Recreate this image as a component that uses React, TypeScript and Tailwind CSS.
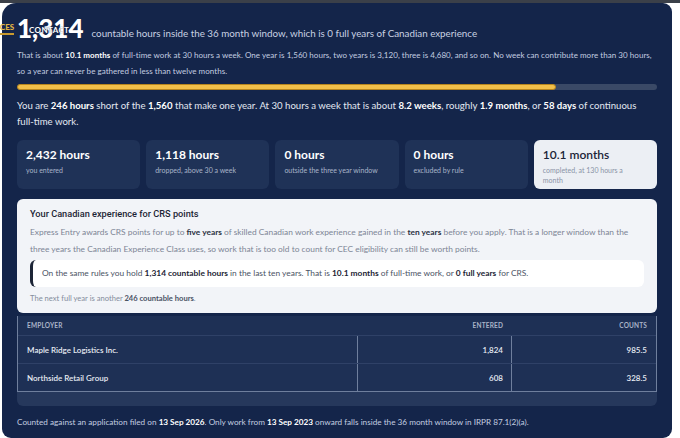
const font = { fontFamily: "Lato, 'Noto Sans', sans-serif" };

type Stat = { value: string; label: string; light?: boolean };

const stats: Stat[] = [
  { value: "2,432 hours", label: "you entered" },
  { value: "1,118 hours", label: "dropped, above 30 a week" },
  { value: "0 hours", label: "outside the three year window" },
  { value: "0 hours", label: "excluded by rule" },
  { value: "10.1 months", label: "completed, at 130 hours a month", light: true },
];

const rows = [
  { employer: "Maple Ridge Logistics Inc.", entered: "1,824", counts: "985.5" },
  { employer: "Northside Retail Group", entered: "608", counts: "328.5" },
];

function StatCard({ s }: { s: Stat }) {
  return (
    <div
      className={
        s.light
          ? "h-[49px] rounded-md bg-[#eceff4] px-[9px] pt-[7px]"
          : "h-[49px] rounded-md bg-[#1f3257] px-[9px] pt-[7px]"
      }
    >
      <div
        className={
          s.light
            ? "text-[12px] font-semibold leading-[16px] text-[#1b2438]"
            : "text-[12px] font-bold leading-[16px] text-white"
        }
      >
        {s.value}
      </div>
      <div
        className={
          s.light
            ? "mt-[2px] w-[88px] text-[7px] leading-[10px] text-[#8a93a6]"
            : "mt-[2px] text-[7px] leading-[10px] text-[#a9b4c9]"
        }
      >
        {s.label}
      </div>
    </div>
  );
}

export default function App() {
  return (
    <div className="relative h-[438px] w-[680px] overflow-hidden bg-white" style={font}>
      <div className="h-[3px] bg-[#3b4049]" />
      <div className="ml-[2px] mr-[8px] h-[435px] rounded-[9px] rounded-tl-[14px] bg-[#14254a] px-[15px] pt-[11px]">
        {/* headline */}
        <div className="flex items-end gap-[8px]">
          <div className="relative">
            <span className="text-[26px] font-black leading-[29px] text-white">1,314</span>
            <span className="absolute left-[12px] top-[10px] text-[8px] font-bold tracking-wider text-white [text-shadow:0_0_1px_#14254a]">
              CONTACT
            </span>
          </div>
          <span className="pb-[3px] text-[9.8px] text-[#c9d2e3]">
            countable hours inside the 36 month window, which is 0 full years of Canadian experience
          </span>
        </div>

        <p className="mt-[3px] text-[8px] leading-[16px] tracking-[0.005em] text-[#c3cde0]">
          That is about <b className="text-white">10.1 months</b> of full-time work at 30 hours a week. One year is
          1,560 hours, two years is 3,120, three is 4,680, and so on. No week can contribute more than 30 hours,
          <br />
          so a year can never be gathered in less than twelve months.
        </p>

        {/* progress */}
        <div className="mt-[5px] h-[6px] w-full rounded-full bg-[#3a4966]">
          <div className="h-full rounded-full border border-[#b8861e] bg-[#f2c04a]" style={{ width: "84.2%" }} />
        </div>

        <p className="mt-[8px] text-[9.6px] leading-[16px] text-[#e3e8f1]">
          You are <b className="text-white">246 hours</b> short of the <b className="text-white">1,560</b> that make
          one year. At 30 hours a week that is about <b className="text-white">8.2 weeks</b>, roughly{" "}
          <b className="text-white">1.9 months</b>, or <b className="text-white">58 days</b> of continuous{" "}
          <span className="whitespace-nowrap">full-time work.</span>
        </p>

        {/* stat cards */}
        <div className="mt-[10px] grid grid-cols-5 gap-[6px]">
          {stats.map((s) => (
            <StatCard key={s.value + s.label} s={s} />
          ))}
        </div>

        {/* CRS card */}
        <div className="mt-[10px] h-[114px] rounded-md bg-[#f2f4f8] px-[13px] pt-[8px]">
          <h3
            className="text-[9.2px] font-medium leading-[14px] text-[#1c2434]"
            style={{ fontFamily: "Roboto, sans-serif" }}
          >
            Your Canadian experience for CRS points
          </h3>
          <p className="mt-[3px] text-[8.4px] leading-[17px] text-[#7d8596]">
            Express Entry awards CRS points for up to <b className="text-[#2a3142]">five years</b> of skilled Canadian
            work experience gained in the <b className="text-[#2a3142]">ten years</b> before you apply. That is a
            longer window than the three years the Canadian Experience Class uses, so work that is too old to count
            for CEC eligibility can still be worth points.
          </p>
          <div className="mt-[2px] flex h-[27px] items-center rounded-md border-l-[3px] border-[#1d2536] bg-white pl-[9px] text-[8.4px] text-[#4a5264]">
            <span>
              On the same rules you hold <b className="text-[#1c2434]">1,314 countable hours</b> in the last ten
              years. That is <b className="text-[#1c2434]">10.1 months</b> of full-time work, or{" "}
              <b className="text-[#1c2434]">0 full years</b> for CRS.
            </span>
          </div>
          <p className="mt-[5px] text-[7.6px] leading-[12px] text-[#858d9d]">
            The next full year is another <b className="text-[#4a5264]">246 countable hours</b>.
          </p>
        </div>

        {/* employer table */}
        <div className="mt-[3px] rounded-b-md bg-[#26385c] pb-[14px]">
          <div className="border-x border-b border-[#6f7f9d] bg-[#1e3055]">
            <div className="grid h-[20px] grid-cols-[1fr_154px_145px] items-center border-b border-[#2f4167] text-[6.5px] font-bold tracking-wide text-[#aab4c8]">
              <span className="pl-[9px]">EMPLOYER</span>
              <span className="pr-[8px] text-right">ENTERED</span>
              <span className="pr-[9px] text-right">COUNTS</span>
            </div>
            {rows.map((r, i) => (
              <div
                key={r.employer}
                className={
                  i === 0
                    ? "grid h-[28px] grid-cols-[1fr_154px_145px] items-center border-b border-[#2f4167] text-[8px] font-semibold text-[#e6ebf3]"
                    : "grid h-[27px] grid-cols-[1fr_154px_145px] items-center text-[8px] font-semibold text-[#e6ebf3]"
                }
              >
                <span className="pl-[9px]">{r.employer}</span>
                <span className="flex h-full items-center justify-end border-l border-[#6f7f9d] pr-[8px]">
                  {r.entered}
                </span>
                <span className="flex h-full items-center justify-end border-l border-[#6f7f9d] pr-[9px]">
                  {r.counts}
                </span>
              </div>
            ))}
          </div>
        </div>

        <p className="mt-[10px] text-[8.2px] text-[#c3cde0]">
          Counted against an application filed on <b className="text-white">13 Sep 2026</b>. Only work from{" "}
          <b className="text-white">13 Sep 2023</b> onward falls inside the 36 month window in IRPR 87.1(2)(a).
        </p>
      </div>

      {/* overlapping nav tab at the left edge */}
      <div className="absolute left-0 top-[21px] border-b-2 border-[#c99a2e] text-[8px] font-black text-[#e0b243]">
        CES
      </div>
    </div>
  );
}
